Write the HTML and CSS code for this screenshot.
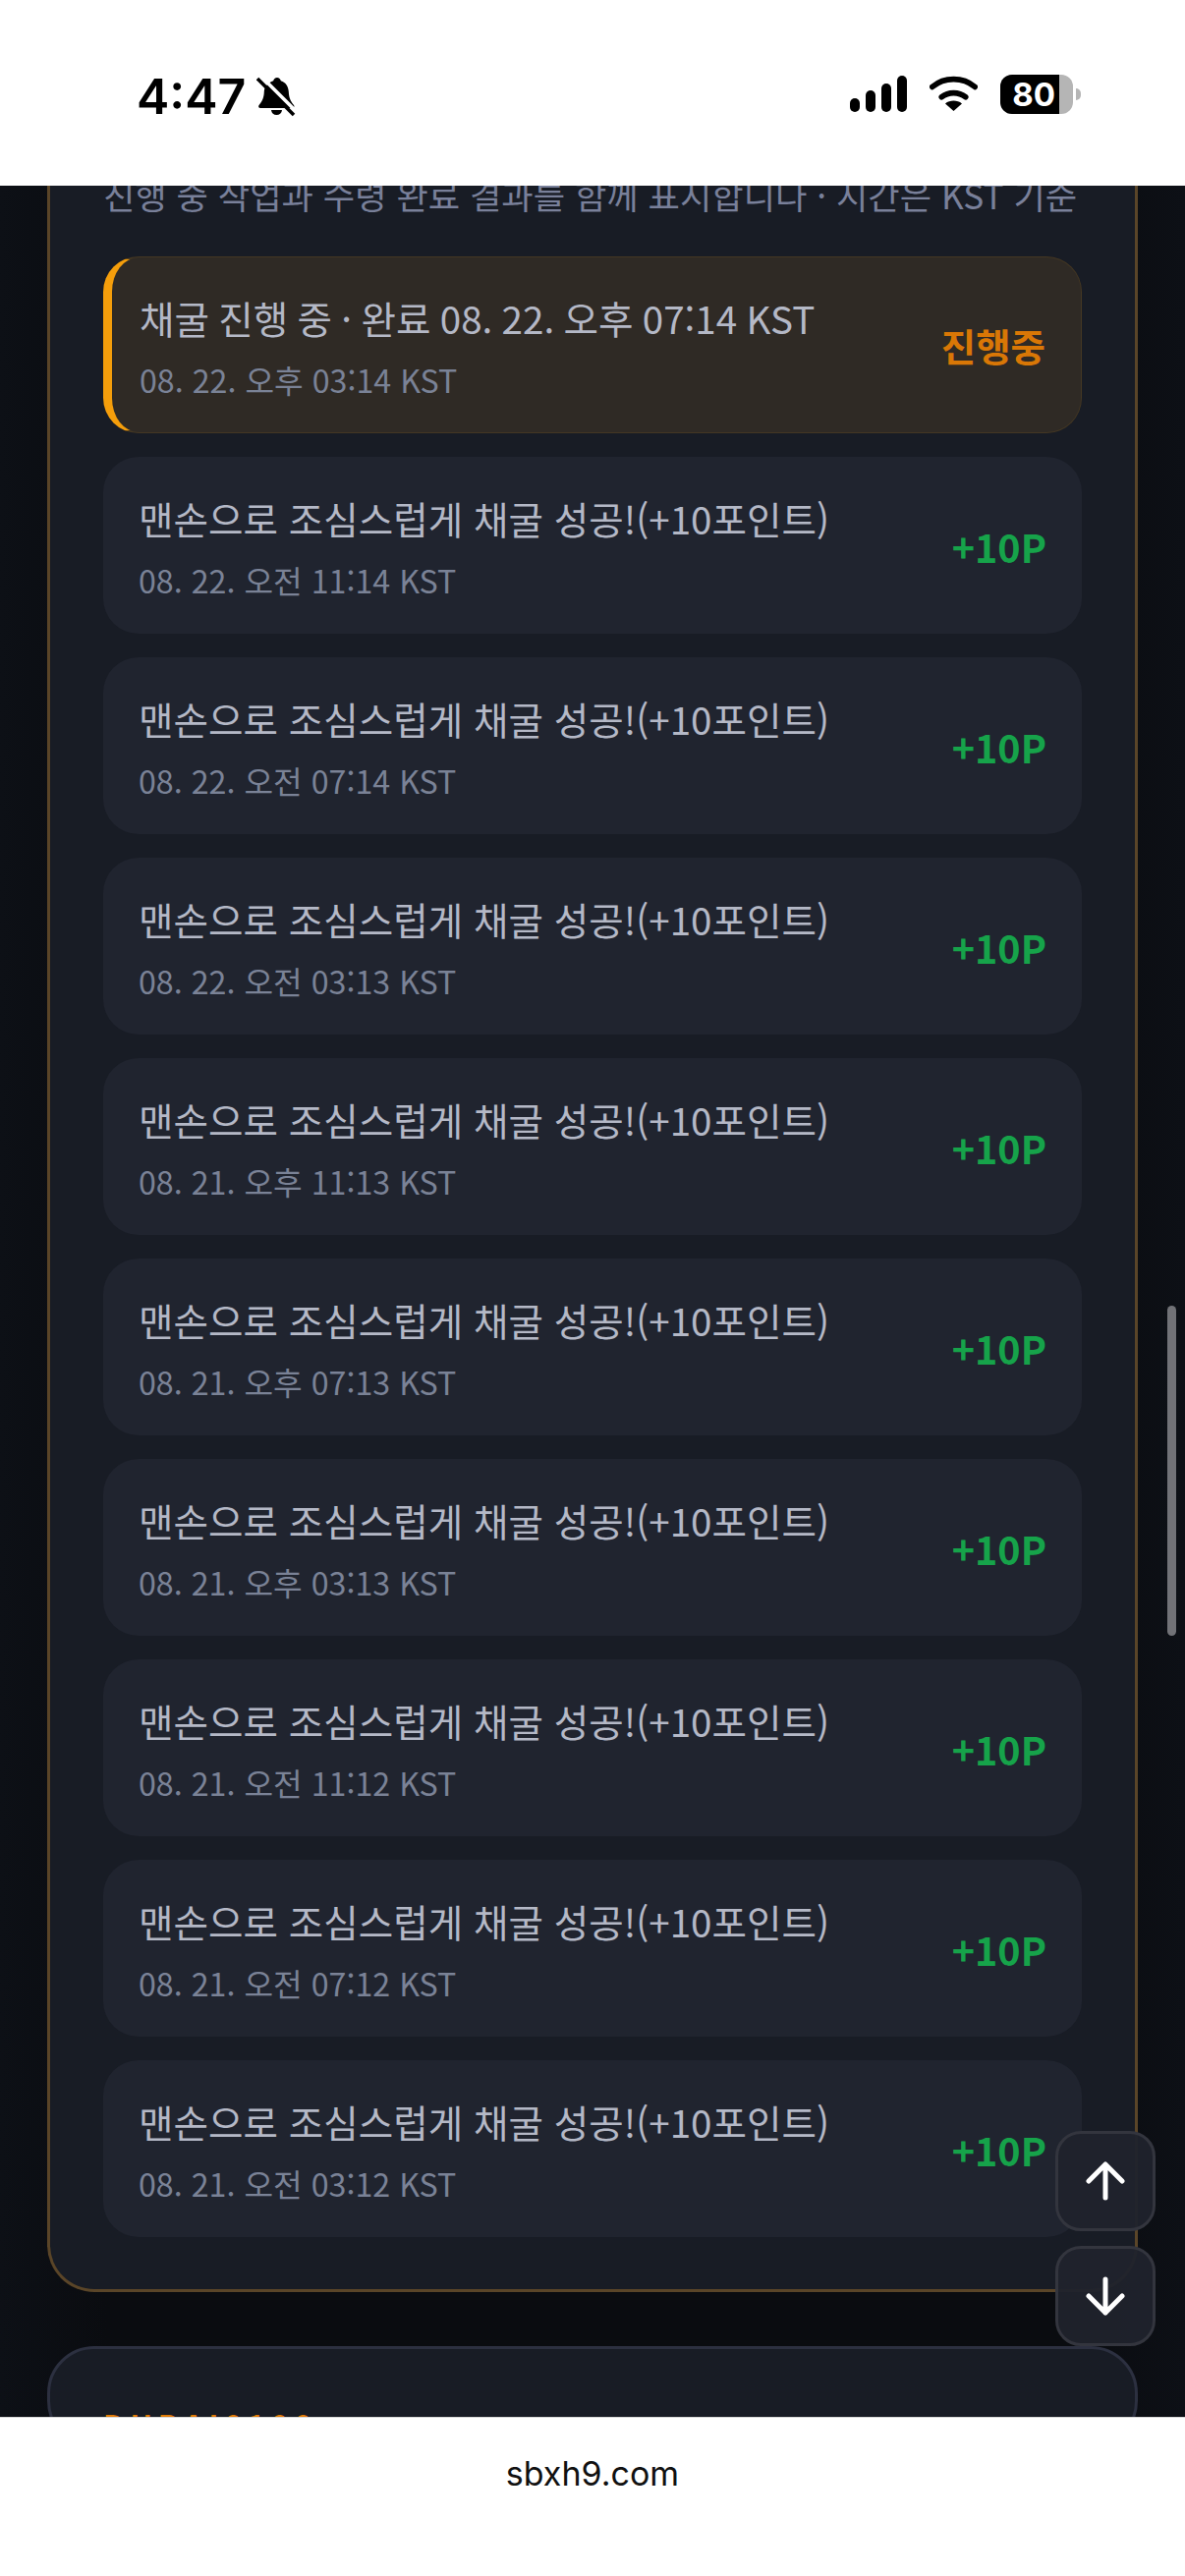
FILE: index.html
```html
<!DOCTYPE html>
<html lang="ko">
<head>
  <meta charset="UTF-8">
  <title>sbxh9.com</title>
  <link rel="stylesheet" href="styles.css">
</head>
<body>

  <header class="statusbar">
    <div class="status-left">
      <span class="clock">4:47</span>
      <svg class="bell" viewBox="0 0 40 42" width="40" height="42">
        <path d="M21 2c2 0 3.400 1.400 3.800 3.200C30 6.800 32.500 11 32.800 16.500c.3 5 1.200 8.700 5.200 13.500 1 1.300.3 3-1.400 3H4c-1.700 0-2.400-1.700-1.400-3 3.400-4 5-7.500 5.200-13.500C8 11 12.200 6.800 17.200 5.200 17.600 3.400 19 2 21 2z"/>
        <path d="M15 35h11c-.4 3.200-2.600 5-5.500 5s-5.100-1.800-5.500-5z"/>
        <path class="bell-gap" d="M4 0l36 36"/>
        <path class="bell-slash" d="M1 3l37 37"/>
      </svg>
    </div>
    <div class="status-right">
      <svg viewBox="0 0 58 40" width="58" height="40">
        <rect x="0" y="24" width="10" height="14" rx="5"/>
        <rect x="16" y="16" width="10" height="22" rx="5"/>
        <rect x="32" y="9" width="10" height="29" rx="5"/>
        <rect x="48" y="1" width="10" height="37" rx="5"/>
      </svg>
      <svg class="wifi" viewBox="0 0 52 40" width="49" height="38">
        <path d="M3 12c13-11 33-11 46 0"/>
        <path d="M13 23c7.500-6 18.500-6 26 0"/>
        <path class="wifi-dot" d="M26 38l-9-8c5-4 13-4 18 0z"/>
      </svg>
      <div class="battery">
        <div class="battery-body"><span class="battery-fill">80</span></div>
        <div class="battery-cap"></div>
      </div>
    </div>
  </header>

  <main class="viewport">
    <div class="page">
      <section class="card card-log">
        <p class="card-desc">진행 중 작업과 수령 완료 결과를 함께 표시합니다 · 시간은 KST 기준</p>
        <ul class="log-list">
          <li class="log-row active">
            <div class="log-text">
              <div class="log-title">채굴 진행 중 · 완료 08. 22. 오후 07:14 KST</div>
              <div class="log-time">08. 22. 오후 03:14 KST</div>
            </div>
            <span class="log-amount">진행중</span>
          </li>
          <li class="log-row">
            <div class="log-text">
              <div class="log-title">맨손으로 조심스럽게 채굴 성공!(+10포인트)</div>
              <div class="log-time">08. 22. 오전 11:14 KST</div>
            </div>
            <span class="log-amount">+10P</span>
          </li>
          <li class="log-row">
            <div class="log-text">
              <div class="log-title">맨손으로 조심스럽게 채굴 성공!(+10포인트)</div>
              <div class="log-time">08. 22. 오전 07:14 KST</div>
            </div>
            <span class="log-amount">+10P</span>
          </li>
          <li class="log-row">
            <div class="log-text">
              <div class="log-title">맨손으로 조심스럽게 채굴 성공!(+10포인트)</div>
              <div class="log-time">08. 22. 오전 03:13 KST</div>
            </div>
            <span class="log-amount">+10P</span>
          </li>
          <li class="log-row">
            <div class="log-text">
              <div class="log-title">맨손으로 조심스럽게 채굴 성공!(+10포인트)</div>
              <div class="log-time">08. 21. 오후 11:13 KST</div>
            </div>
            <span class="log-amount">+10P</span>
          </li>
          <li class="log-row">
            <div class="log-text">
              <div class="log-title">맨손으로 조심스럽게 채굴 성공!(+10포인트)</div>
              <div class="log-time">08. 21. 오후 07:13 KST</div>
            </div>
            <span class="log-amount">+10P</span>
          </li>
          <li class="log-row">
            <div class="log-text">
              <div class="log-title">맨손으로 조심스럽게 채굴 성공!(+10포인트)</div>
              <div class="log-time">08. 21. 오후 03:13 KST</div>
            </div>
            <span class="log-amount">+10P</span>
          </li>
          <li class="log-row">
            <div class="log-text">
              <div class="log-title">맨손으로 조심스럽게 채굴 성공!(+10포인트)</div>
              <div class="log-time">08. 21. 오전 11:12 KST</div>
            </div>
            <span class="log-amount">+10P</span>
          </li>
          <li class="log-row">
            <div class="log-text">
              <div class="log-title">맨손으로 조심스럽게 채굴 성공!(+10포인트)</div>
              <div class="log-time">08. 21. 오전 07:12 KST</div>
            </div>
            <span class="log-amount">+10P</span>
          </li>
          <li class="log-row">
            <div class="log-text">
              <div class="log-title">맨손으로 조심스럽게 채굴 성공!(+10포인트)</div>
              <div class="log-time">08. 21. 오전 03:12 KST</div>
            </div>
            <span class="log-amount">+10P</span>
          </li>
        </ul>
      </section>

      <section class="card card-next">
        <h2 class="card-label">DUBAI0100</h2>
      </section>
    </div>

    <div class="scrollbar"></div>

    <div class="scroll-btns">
      <button class="scroll-btn">
        <svg viewBox="0 0 40 40" width="40" height="40"><path d="M20 37V3M3 20L20 3l17 17"/></svg>
      </button>
      <button class="scroll-btn">
        <svg viewBox="0 0 40 40" width="40" height="40"><path d="M20 3v34M3 20l17 17 17-17"/></svg>
      </button>
    </div>
  </main>

  <footer class="urlbar">sbxh9.com</footer>

</body>
</html>
```

FILE: styles.css
```css
* {
  box-sizing: border-box;
}

body {
  margin: 0;
  width: 1206px;
  height: 2622px;
  display: flex;
  flex-direction: column;
  overflow: hidden;
  background: #fff;
  font-family: "Noto Sans CJK KR", "Noto Sans", sans-serif;
}

/* phone status bar */
.statusbar {
  height: 189px;
  flex: none;
  background: #fff;
  display: flex;
  justify-content: space-between;
  align-items: flex-start;
  padding: 76px 106px 0 139px;
}

.status-left {
  display: flex;
  align-items: center;
  gap: 11px;
}

.clock {
  font-family: "Inter", sans-serif;
  font-size: 50px;
  line-height: 44px;
  font-weight: 600;
  color: #000;
}

.bell path {
  fill: #000;
}

.bell .bell-gap {
  fill: none;
  stroke: #fff;
  stroke-width: 3.500;
}

.bell .bell-slash {
  fill: none;
  stroke: #000;
  stroke-width: 3.500;
}

.status-right {
  display: flex;
  align-items: center;
  gap: 23px;
}

.status-right svg rect {
  fill: #000;
}

.wifi path {
  fill: none;
  stroke: #000;
  stroke-width: 6;
  stroke-linecap: round;
}

.wifi .wifi-dot {
  fill: #000;
  stroke: none;
}

.battery {
  display: flex;
  align-items: center;
  gap: 3px;
}

.battery-body {
  width: 74px;
  height: 40px;
  background: #b5b5b5;
  border-radius: 12px;
  overflow: hidden;
}

.battery-fill {
  display: block;
  width: 60px;
  height: 40px;
  background: #000;
  color: #fff;
  font-family: "Inter", sans-serif;
  font-size: 33px;
  line-height: 40px;
  font-weight: 700;
  text-align: right;
  padding-right: 4px;
}

.battery-cap {
  width: 5px;
  height: 12px;
  background: #b5b5b5;
  border-radius: 0 6px 6px 0;
}

/* scrolled page area */
.viewport {
  position: relative;
  flex: 1;
  overflow: hidden;
  background: linear-gradient(90deg, #0d1016 0, #0a0c10 9%, #0a0c10 91%, #0d1016 100%);
}

.page {
  padding: 0 48px;
  margin-top: -17px;
  display: flex;
  flex-direction: column;
  gap: 55px;
}

.card {
  background: #181c25;
  border-radius: 48px;
  padding: 0 54px;
}

.card-log {
  border: 3px solid #5a4528;
  border-top: 0;
  border-radius: 0 0 48px 48px;
  padding-bottom: 53px;
}

.card-next {
  border: 3px solid #2c3040;
  padding-top: 54px;
}

.card-desc {
  margin: 0 0 37px;
  color: #79809a;
  font-size: 35.200px;
  line-height: 52px;
  font-weight: 400;
  white-space: nowrap;
}

.card-label {
  margin: 0;
  color: #e07b06;
  font-size: 30px;
  font-weight: 700;
  letter-spacing: 6px;
}

.log-list {
  list-style: none;
  margin: 0;
  padding: 0;
  display: flex;
  flex-direction: column;
  gap: 24px;
}

.log-row {
  height: 180px;
  background: #20242f;
  border-radius: 36px;
  padding: 0 36px;
  display: flex;
  align-items: center;
  justify-content: space-between;
}

.log-row.active {
  background: #2f2a25;
  border: 1px solid #443723;
  border-left: 9px solid #f59e0b;
  padding-left: 28px;
}

.log-row.active .log-title {
  word-spacing: -1.500px;
}

.log-text {
  padding-top: 2px;
}

.log-title {
  color: #b4b8c6;
  font-size: 38.600px;
  line-height: 56px;
  white-space: nowrap;
}

.log-time {
  margin-top: 11px;
  color: #7a8296;
  font-size: 32.200px;
  line-height: 48px;
  white-space: nowrap;
}

.log-amount {
  color: #16a34a;
  font-size: 39.500px;
  font-weight: 700;
}

.log-row.active .log-amount {
  color: #d97706;
  font-size: 38.500px;
}

/* floating controls */
.scrollbar {
  position: absolute;
  left: 1188px;
  top: 1140px;
  width: 9px;
  height: 336px;
  border-radius: 5px;
  background: #717277;
}

.scroll-btns {
  position: absolute;
  left: 1074px;
  top: 1980px;
  display: flex;
  flex-direction: column;
  gap: 15px;
}

.scroll-btn {
  width: 102px;
  height: 102px;
  padding: 0;
  background: rgba(32, 35, 44, 0.95);
  border: 3px solid #33353e;
  border-radius: 26px;
  display: flex;
  align-items: center;
  justify-content: center;
}

.scroll-btn path {
  fill: none;
  stroke: #fff;
  stroke-width: 5;
  stroke-linecap: round;
  stroke-linejoin: round;
}

/* browser address bar */
.urlbar {
  height: 162px;
  flex: none;
  background: #fff;
  border-top: 1px solid #d9d9d9;
  color: #111;
  font-family: "Inter", sans-serif;
  font-size: 34px;
  text-align: center;
  padding-top: 36px;
}
```
